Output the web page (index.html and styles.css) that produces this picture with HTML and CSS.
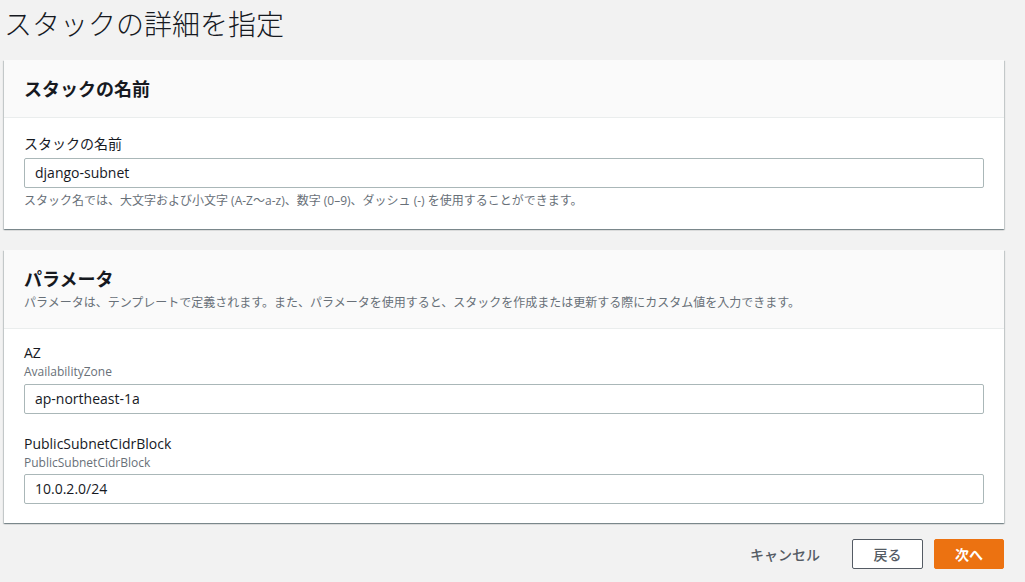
FILE: index.html
```html
<!DOCTYPE html>
<html lang="ja">
<head>
<meta charset="utf-8">
<title>スタックの詳細を指定</title>
<link rel="stylesheet" href="styles.css">
</head>
<body>
<div class="page">
  <h1 class="page-title">スタックの詳細を指定</h1>

  <section class="card">
    <div class="card-header">
      <h2 class="card-title">スタックの名前</h2>
    </div>
    <div class="card-body body-name">
      <label class="field-label">スタックの名前</label>
      <div class="input input-first">django-subnet</div>
      <p class="help">スタック名では、大文字および小文字 (A-Z〜a-z)、数字 (0–9)、ダッシュ (-) を使用することができます。</p>
    </div>
  </section>

  <section class="card card-params">
    <div class="card-header header-params">
      <h2 class="card-title">パラメータ</h2>
      <p class="card-desc">パラメータは、テンプレートで定義されます。また、パラメータを使用すると、スタックを作成または更新する際にカスタム値を入力できます。</p>
    </div>
    <div class="card-body body-params">
      <div class="field">
        <div class="field-label">AZ</div>
        <div class="field-sub">AvailabilityZone</div>
        <div class="input">ap-northeast-1a</div>
      </div>
      <div class="field field-next">
        <div class="field-label">PublicSubnetCidrBlock</div>
        <div class="field-sub">PublicSubnetCidrBlock</div>
        <div class="input input-last">10.0.2.0/24</div>
      </div>
    </div>
  </section>

  <div class="actions">
    <button class="btn btn-link">キャンセル</button>
    <button class="btn btn-normal">戻る</button>
    <button class="btn btn-primary">次へ</button>
  </div>
</div>
</body>
</html>
```

FILE: styles.css
```css
* { box-sizing: border-box; }
html, body {
  margin: 0;
  padding: 0;
  background: #f2f2f2;
}
body {
  font-family: "Open Sans", "Noto Sans CJK JP", sans-serif;
  color: #16191f;
  width: 1025px;
  height: 582px;
  overflow: hidden;
}
.page {
  padding: 0 21px 0 4px;
}
.page-title {
  margin: 0;
  font-family: "Noto Sans CJK JP", sans-serif;
  font-weight: 300;
  font-size: 28px;
  line-height: 40px;
  padding-top: 3px;
  color: #16191f;
}
.card {
  margin-top: 17px;
  width: 1000px;
  background: #fff;
  box-shadow: 0 1px 1px 0 rgba(0, 28, 36, 0.3), 1px 1px 1px 0 rgba(0, 28, 36, 0.15), -1px 1px 1px 0 rgba(0, 28, 36, 0.15);
}
.card-params {
  margin-top: 21px;
}
.card-header {
  background: #fafafa;
  border-bottom: 1px solid #eaeded;
  padding: 15px 20px 16px;
}
.header-params {
  padding: 16px 20px 18px;
}
.card-title {
  margin: 0;
  font-family: "Noto Sans CJK JP", sans-serif;
  font-weight: 700;
  font-size: 18px;
  line-height: 26px;
}
.header-params .card-title {
  line-height: 24px;
}
.card-desc {
  margin: 4px 0 0;
  font-family: "Noto Sans CJK JP", sans-serif;
  font-size: 12px;
  line-height: 16px;
  color: #687078;
}
.card-body {
  padding: 15px 20px 20px;
}
.body-params {
  padding: 13px 20px 19px;
}
.field-label {
  display: block;
  font-size: 14px;
  line-height: 22px;
  color: #16191f;
}
.field-sub {
  font-size: 12px;
  line-height: 16px;
  color: #687078;
}
.field-next {
  margin-top: 19px;
}
.input {
  margin-top: 4px;
  height: 30px;
  border: 1px solid #aab7b8;
  border-radius: 2px;
  background: #fff;
  padding: 0 10px;
  font-size: 14px;
  line-height: 28px;
  color: #16191f;
}
.input-first {
  margin-top: 3px;
}
.input-last {
  margin-top: 3px;
}
.help {
  margin: 5px 0 0;
  font-family: "Open Sans", "Noto Sans CJK JP", sans-serif;
  font-size: 12px;
  line-height: 16px;
  color: #687078;
}
.actions {
  width: 1000px;
  margin-top: 16px;
  display: flex;
  justify-content: flex-end;
  gap: 11px;
}
.btn {
  height: 30px;
  border-radius: 2px;
  font-family: "Noto Sans CJK JP", sans-serif;
  font-weight: 700;
  font-size: 14px;
  line-height: 28px;
  padding: 0 20px;
  cursor: pointer;
}
.btn-link {
  background: transparent;
  border: 1px solid transparent;
  color: #545b64;
  font-weight: 500;
}
.btn-normal {
  background: #fff;
  border: 1px solid #545b64;
  color: #545b64;
  width: 71px;
  padding: 0;
  font-weight: 500;
}
.btn-primary {
  background: #ec7211;
  border: 1px solid #ec7211;
  color: #fff;
  width: 70px;
  padding: 0;
}
```
